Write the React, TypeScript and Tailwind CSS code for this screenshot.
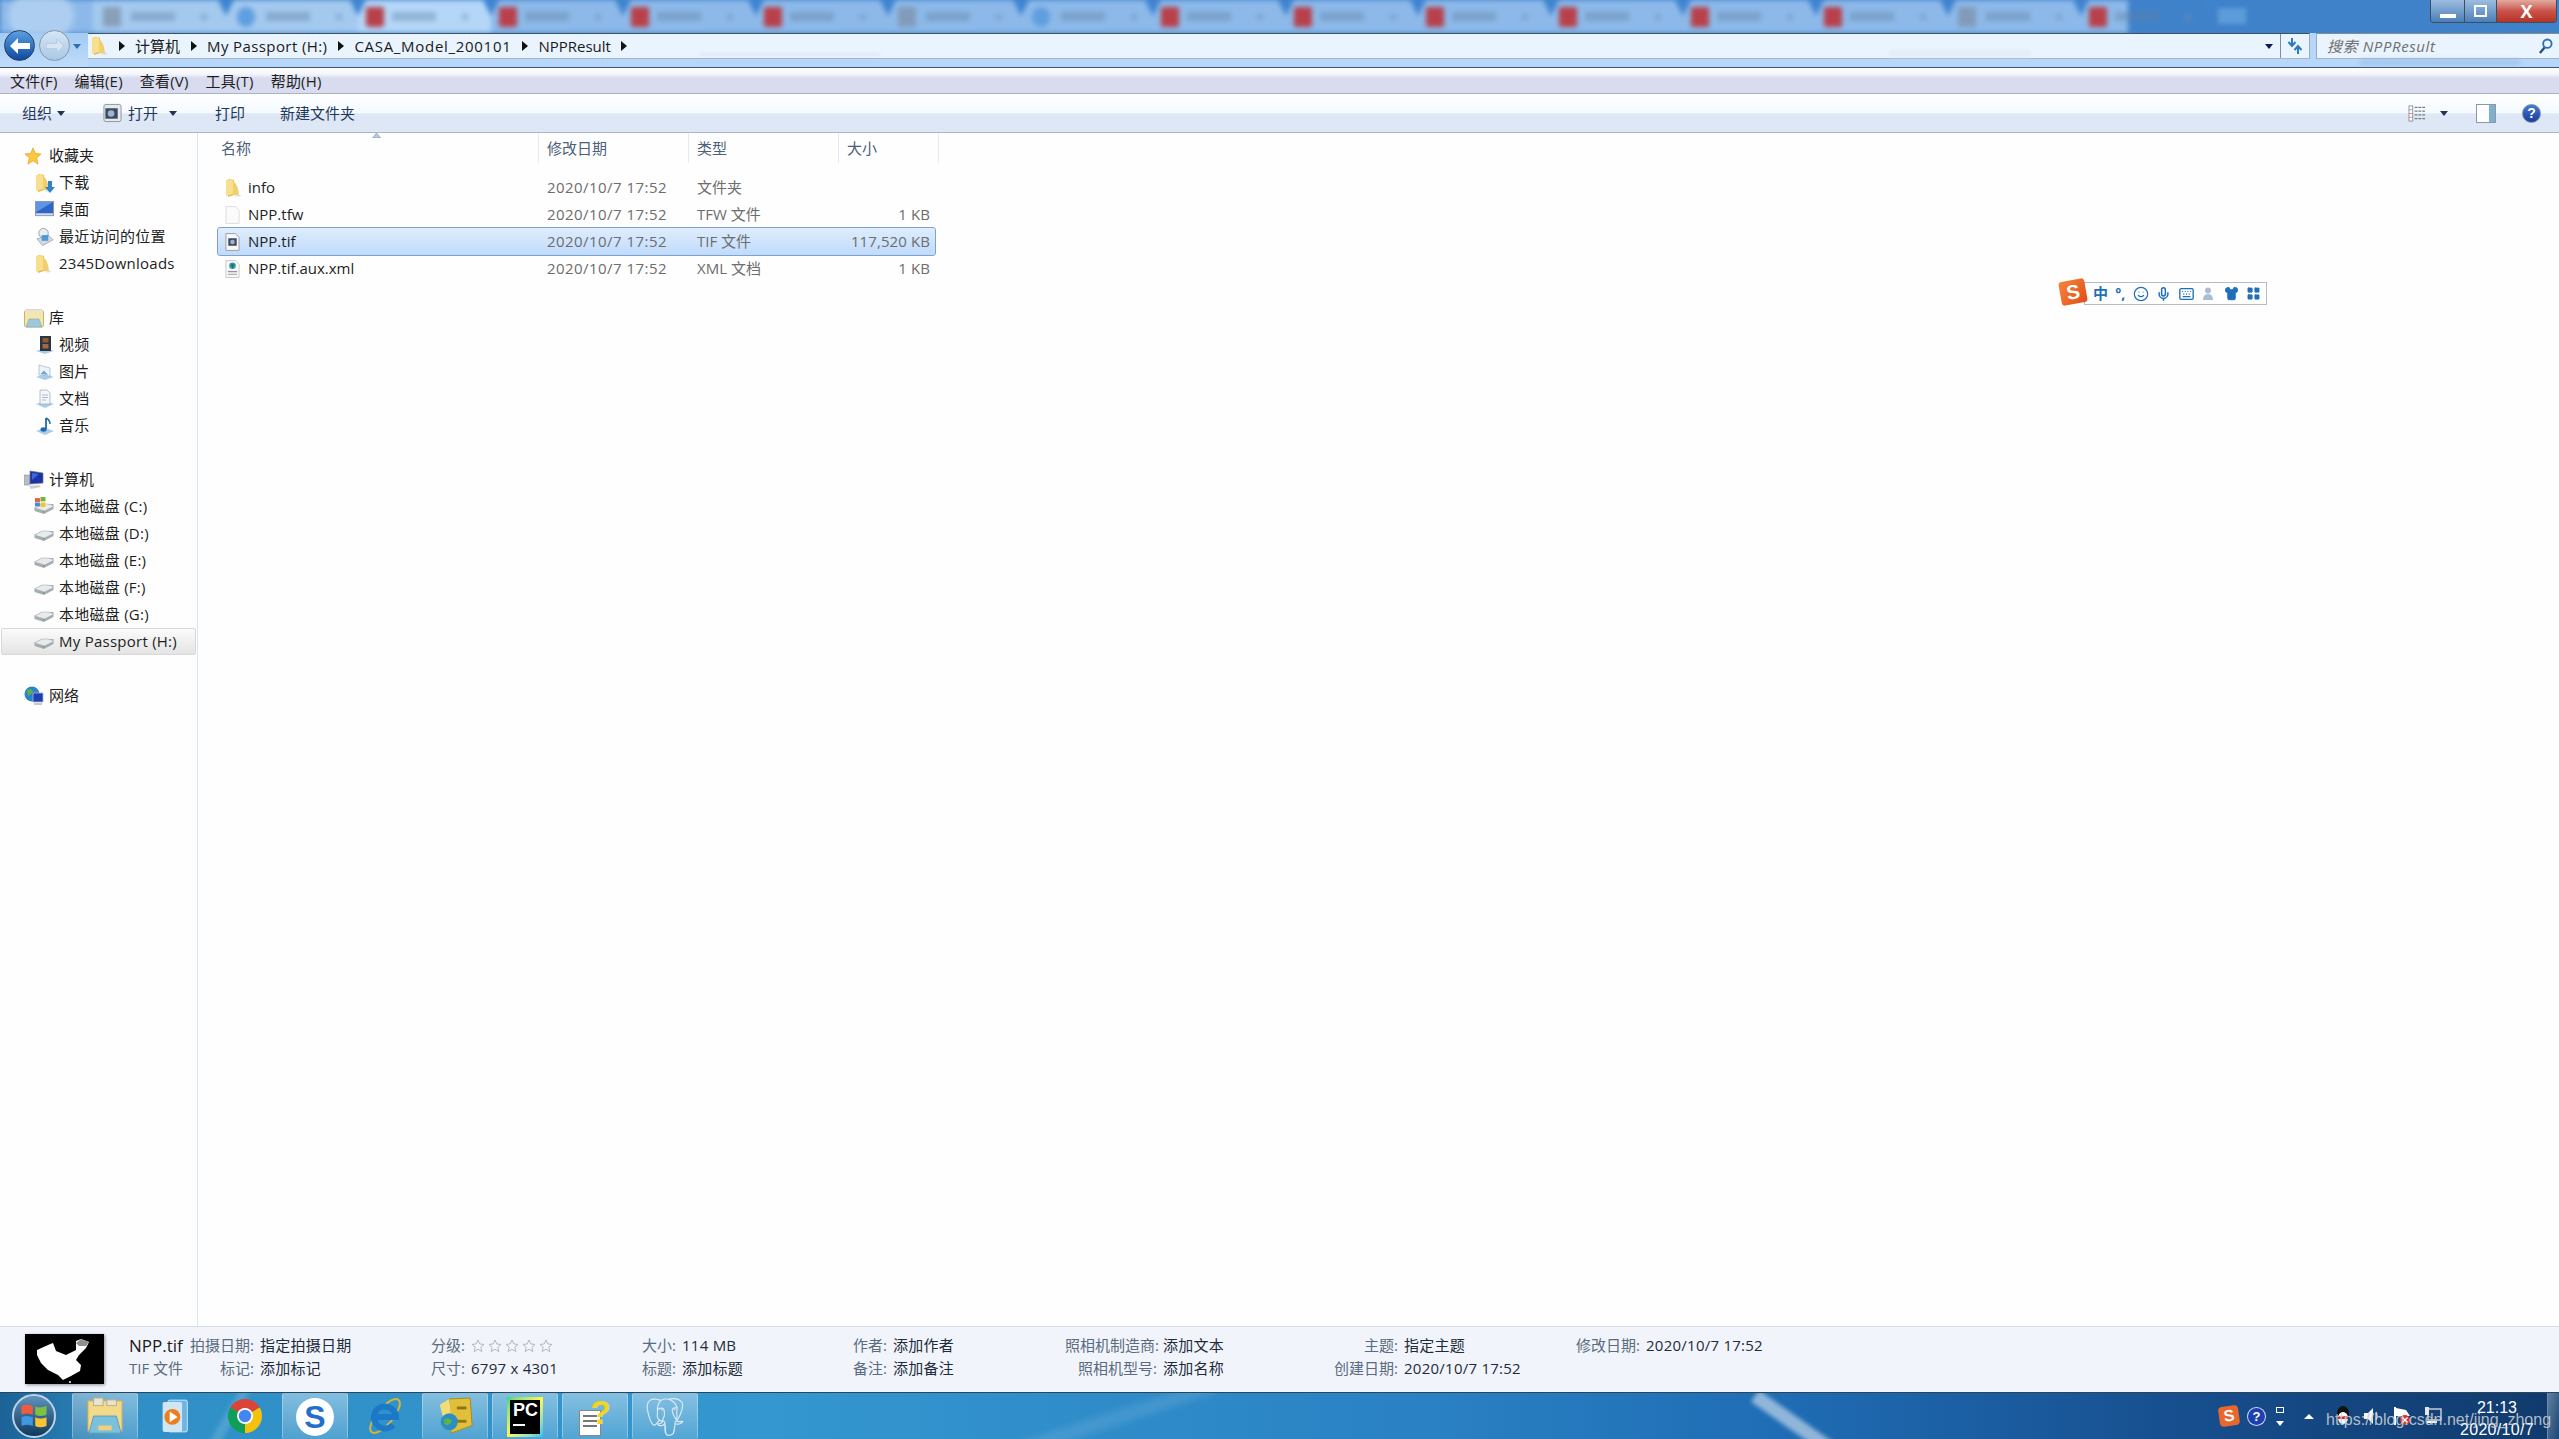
import type { ReactNode } from 'react';
import { Keyboard, LayoutGrid, Mic, Shirt, Smile } from 'lucide-react';
import { SiPostgresql } from 'react-icons/si';

const tabs = ['g', 'b', 'r', 'r', 'r', 'r', 'a', 'b', 'r', 'r', 'r', 'r', 'r', 'r', 'a', 'r'];

function Folder({ className = 'w-[18px] h-[20px]' }: { className?: string }) {
  return (
    <svg viewBox="0 0 18 20" className={className}>
      <path d="M3 1 L9 2 L9 17 L3 19 Z" fill="#e2b94f" />
      <path d="M1 2 L8 1 L8 16 L1 18 Z" fill="#f6df8e" />
      <path d="M8 3 Q13 6 14 17 L8 17 Z" fill="#f0cf6c" />
      <path d="M14 17 L17 17 L14 18.5 L8 18 Z" fill="#c9ccd0" opacity="0.7" />
    </svg>
  );
}

function Star() {
  return (
    <svg viewBox="0 0 20 20" className="w-[18px] h-[20px]">
      <path d="M10 1 L12.6 7.2 L19 7.8 L14 12 L15.6 19 L10 15.2 L4.4 19 L6 12 L1 7.8 L7.4 7.2 Z" fill="#fbc93b" stroke="#ec9a26" strokeWidth="0.8" />
    </svg>
  );
}

function DownloadFolder() {
  return (
    <div className="relative w-[18px] h-[20px]">
      <Folder />
      <svg viewBox="0 0 10 12" className="absolute right-[-2px] bottom-0 w-[10px] h-[12px]">
        <path d="M3 0 H7 V6 H10 L5 12 L0 6 H3 Z" fill="#2f86c9" />
      </svg>
    </div>
  );
}

function DesktopIcon() {
  return (
    <svg viewBox="0 0 20 18" className="w-[19px] h-[17px]">
      <rect x="0.5" y="0.5" width="19" height="15" fill="#2f66c6" stroke="#8a97ad" />
      <path d="M1 1 H19 L1 12 Z" fill="#5e95e6" />
      <rect x="1" y="13" width="18" height="2" fill="#d7dde8" />
    </svg>
  );
}

function RecentIcon() {
  return (
    <svg viewBox="0 0 20 20" className="w-[19px] h-[20px]">
      <circle cx="9" cy="6" r="5" fill="#e9edf1" stroke="#9aa3ac" />
      <path d="M2 12 L14 8 L19 13 L8 19 Z" fill="#d5dae0" stroke="#8d949c" strokeWidth="0.7" />
      <rect x="7" y="8" width="7" height="6" fill="#4c9ad8" />
    </svg>
  );
}

function LibraryIcon() {
  return (
    <svg viewBox="0 0 20 20" className="w-[20px] h-[20px]">
      <rect x="0.5" y="2" width="19" height="17" rx="2" fill="#f6e6a8" stroke="#cbb36b" />
      <rect x="1" y="2" width="18" height="4" fill="#ece4c6" />
      <path d="M5 11 H15 L18 19 H2 Z" fill="#9cc9dd" stroke="#7fa7bb" strokeWidth="0.6" />
    </svg>
  );
}

function VideoIcon() {
  return (
    <svg viewBox="0 0 20 20" className="w-[20px] h-[20px]">
      <path d="M1 16 L10 13 L19 16 L10 19 Z" fill="#a9cde6" />
      <rect x="5" y="1" width="11" height="15" fill="#2d3440" />
      <rect x="7.5" y="3" width="6" height="4.5" fill="#8a5a3b" />
      <rect x="7.5" y="9" width="6" height="4.5" fill="#a06a44" />
    </svg>
  );
}

function PictureIcon() {
  return (
    <svg viewBox="0 0 20 20" className="w-[20px] h-[20px]">
      <path d="M1 15 L10 12 L19 15 L10 18 Z" fill="#a9cde6" />
      <path d="M4 3 L15 6 L15 14 L4 13 Z" fill="#eef3f8" stroke="#9ab4c9" strokeWidth="0.7" />
      <path d="M5.5 12 L9 8.5 L13 13 Z" fill="#6ea6d6" />
    </svg>
  );
}

function DocIcon() {
  return (
    <svg viewBox="0 0 20 20" className="w-[20px] h-[20px]">
      <path d="M1 15 L10 12 L19 15 L10 19 Z" fill="#a9cde6" />
      <path d="M5 1 H12 L15 4 V15 H5 Z" fill="#f4f6f9" stroke="#9aa6b3" strokeWidth="0.7" />
      <path d="M7 6 H13 M7 8.5 H13 M7 11 H11" stroke="#a6b5c5" strokeWidth="0.9" />
    </svg>
  );
}

function MusicIcon() {
  return (
    <svg viewBox="0 0 20 20" className="w-[20px] h-[20px]">
      <path d="M1 15 L10 12 L19 15 L10 19 Z" fill="#a9cde6" />
      <path d="M11 2 L11 13" stroke="#2467ad" strokeWidth="1.8" />
      <path d="M11 2 Q15 4 15 8" stroke="#2467ad" strokeWidth="1.5" fill="none" />
      <ellipse cx="8.5" cy="13.5" rx="3" ry="2.2" fill="#2467ad" />
    </svg>
  );
}

function ComputerIcon() {
  return (
    <svg viewBox="0 0 20 20" className="w-[20px] h-[20px]">
      <rect x="0.5" y="5" width="5" height="10" fill="#b9bec6" stroke="#7d848d" strokeWidth="0.5" />
      <path d="M6 1 L19 3 L19 13 L6 14 Z" fill="#1d32a8" stroke="#6f7680" strokeWidth="0.7" />
      <path d="M8 3 L15 4 L8 10 Z" fill="#3c68d8" />
      <path d="M5 16 L15 15 L17 17 L7 19 Z" fill="#c9ced5" />
    </svg>
  );
}

function DriveIcon({ system = false }: { system?: boolean }) {
  return (
    <div className="relative w-[20px] h-[16px] ml-[-1px]">
      <svg viewBox="0 0 20 16" className="absolute left-0 top-0 w-[20px] h-[16px]">
        <path d="M0.5 9 L8 5 H19.5 V10 L10 15 L0.5 12 Z" fill="#a8adb2" />
        <path d="M0.5 9 L8 5 H14 Q19.5 6 19.5 7.5 L10.5 12 L0.5 9 Z" fill="#e8eaec" stroke="#9aa0a6" strokeWidth="0.5" />
        <rect x="9" y="12" width="1.5" height="1.5" fill="#56b04a" />
      </svg>
      {system && (
        <svg viewBox="0 0 10 10" className="absolute left-[1px] top-[-2px] w-[11px] h-[11px]">
          <rect x="0" y="1" width="4.5" height="3.5" fill="#ef5b3c" />
          <rect x="5" y="0" width="4.5" height="4" fill="#6fb63f" />
          <rect x="0" y="5" width="4.5" height="3.5" fill="#3d8fdc" />
          <rect x="5" y="5" width="4.5" height="4" fill="#f5c32c" />
        </svg>
      )}
    </div>
  );
}

function NetworkIcon() {
  return (
    <svg viewBox="0 0 20 20" className="w-[20px] h-[20px]">
      <circle cx="8" cy="8" r="7.5" fill="#2a84c8" />
      <path d="M3 4 Q7 2 9 5 Q7 9 4 10 Z M9 10 Q13 9 14 12 L11 15 Z" fill="#5cb347" />
      <rect x="9" y="7" width="10" height="9" fill="#1f3fb5" stroke="#aeb4bb" strokeWidth="0.8" />
      <rect x="10" y="17" width="8" height="2" fill="#c5cad0" />
    </svg>
  );
}

function BlankFile() {
  return (
    <svg viewBox="0 0 16 20" className="w-[15px] h-[20px]">
      <path d="M1 1 H11 L15 5 V19 H1 Z" fill="#fbfbfb" stroke="#dcdcdc" />
    </svg>
  );
}

function TifFile() {
  return (
    <svg viewBox="0 0 16 20" className="w-[15px] h-[20px]">
      <path d="M1 1 H11 L15 5 V19 H1 Z" fill="#f7f7f7" stroke="#9b9b9b" />
      <rect x="3.5" y="6" width="9" height="8" fill="#3d4a62" />
      <circle cx="8" cy="10" r="2.5" fill="#9fb4cf" />
    </svg>
  );
}

function XmlFile() {
  return (
    <svg viewBox="0 0 16 20" className="w-[15px] h-[20px]">
      <path d="M1 1 H11 L15 5 V19 H1 Z" fill="#fbfbfb" stroke="#c4c4c4" />
      <circle cx="8" cy="6.5" r="3.5" fill="#2a9d8f" />
      <path d="M6.5 5 L9.5 5 L8 10 Z" fill="#1f5fa8" />
      <rect x="3" y="12" width="10" height="1.5" fill="#9a8fb5" />
      <rect x="3" y="15" width="10" height="1.5" fill="#b5b5b5" />
    </svg>
  );
}

function NavItem({ icon, label, selected }: { icon: ReactNode; label: string; selected?: boolean }) {
  return (
    <div className={`h-[27px] flex items-center ml-px rounded-[2px] text-[#1e1e1e] tracking-[0.25px] ${selected ? 'bg-gradient-to-b from-[#fbfbfb] to-[#e4e4e4] border border-[#d8d8d8] pl-[33px]' : 'pl-[34px]'}`}>
      <div className="w-[24px] flex justify-start">{icon}</div>
      <span className="whitespace-nowrap">{label}</span>
    </div>
  );
}

function NavHead({ icon, label }: { icon: ReactNode; label: string }) {
  return (
    <div className="h-[27px] flex items-center pl-[24px] text-[#1e1e1e]">
      <div className="w-[25px]">{icon}</div>
      <span>{label}</span>
    </div>
  );
}

function FileRow({ icon, name, type, size, selected }: { icon: ReactNode; name: string; type: string; size: string; selected?: boolean }) {
  return (
    <div className={`h-[27px] w-[717px] grid grid-cols-[321px_150px_150px_96px] items-center rounded-[2px] ${selected ? 'bg-gradient-to-b from-[#dfedfd] to-[#c0dbfc] outline outline-1 outline-[#7da2ce]' : ''}`}>
      <div className="flex items-center pl-[7px]">
        <div className="w-[23px]">{icon}</div>
        <span className="text-[#1e1e1e]">{name}</span>
      </div>
      <div className="pl-[8px] text-[#6d6d6d] tracking-[0.45px]">2020/10/7 17:52</div>
      <div className="pl-[8px] text-[#6d6d6d]">{type}</div>
      <div className="pr-[5px] text-right text-[#6d6d6d] tracking-[0.1px]">{size}</div>
    </div>
  );
}

function ColHead({ label, className }: { label: string; className: string }) {
  return <div className={`h-[30px] flex items-center border-r border-[#e3eaf2] text-[#4c607a] ${className}`}>{label}</div>;
}

function Fields({ width, labelWidth, rows }: { width: string; labelWidth: string; rows: [string, ReactNode][] }) {
  return (
    <div className={`shrink-0 ${width}`}>
      {rows.map(([label, value]) => (
        <div key={label} className="h-[23px] flex items-center">
          <span className={`shrink-0 text-right text-[#5a6b80] whitespace-nowrap ${labelWidth}`}>{label}</span>
          <span className="ml-[6px] text-[#1e2b3c] whitespace-nowrap tracking-[0.25px]">{value}</span>
        </div>
      ))}
    </div>
  );
}

function RatingStars() {
  return (
    <span className="flex gap-[3px] items-center">
      {[0, 1, 2, 3, 4].map(i => (
        <svg key={i} viewBox="0 0 14 14" className="w-[14px] h-[14px]">
          <path d="M7 1 L8.8 5 L13 5.4 L9.8 8.2 L10.8 12.6 L7 10.2 L3.2 12.6 L4.2 8.2 L1 5.4 L5.2 5 Z" fill="#f7f7f7" stroke="#a9b1ba" strokeWidth="0.9" />
        </svg>
      ))}
    </span>
  );
}

function Crumb({ label, className = '' }: { label: string; className?: string }) {
  return (
    <>
      <span className={`text-[#1a1a1a] whitespace-nowrap ${className}`}>{label}</span>
      <Arrow />
    </>
  );
}

function Arrow() {
  return (
    <svg viewBox="0 0 6 10" className="w-[6px] h-[10px] mx-[10.5px] shrink-0">
      <path d="M0 0 L6 5 L0 10 Z" fill="#111" />
    </svg>
  );
}

function Caret({ className = 'fill-[#22344f]' }: { className?: string }) {
  return (
    <svg viewBox="0 0 8 5" className={`w-[8px] h-[5px] ${className}`}>
      <path d="M0 0 H8 L4 5 Z" />
    </svg>
  );
}

function TaskButton({ active, children }: { active?: boolean; children: ReactNode }) {
  return (
    <div className={`w-[66px] h-[46px] flex items-center justify-center rounded-[2px] ${active ? 'bg-gradient-to-b from-white/40 to-white/15 border border-white/30 border-b-0' : ''}`}>
      {children}
    </div>
  );
}

function App() {
  return (
    <div className="relative w-[2559px] h-[1439px] overflow-hidden flex flex-col bg-white text-[15px] leading-none font-['Open_Sans','Noto_Sans_CJK_SC',sans-serif]">
      {/* title bar, blurred glass behind it */}
      <div className="relative h-[33px] shrink-0 overflow-hidden bg-gradient-to-r from-[#4585cc] to-[#3f82ca]">
        <div className="absolute left-0 top-0 w-[2128px] h-[33px] flex pl-[93px] bg-[#8cb9e9] blur-[2.5px]">
          {tabs.map((t, i) => (
            <div key={i} className={`relative w-[132.5px] h-[33px] shrink-0 flex items-center pl-[8px] ${i === 2 ? 'bg-[#b4d7f8]' : i < 2 ? 'bg-[#a3c9ef]' : ''}`}>
              <div className={`w-[18px] h-[20px] rounded-[2px] ${t === 'r' ? 'bg-[#b8404a]' : t === 'b' ? 'bg-[#5f9fe0] rounded-full w-[12px] ml-[3px] mr-[3px]' : 'bg-[#7d8fa5] w-[14px] ml-[2px] mr-[2px] opacity-70'}`} />
              <div className="ml-[8px] w-[44px] h-[9px] bg-[#5f7f9f] opacity-40" />
              <div className="ml-[26px] w-[6px] h-[6px] bg-[#6f92b8] opacity-50" />
              <div className="absolute right-[-9px] top-[-2px] z-10 w-0 h-0 border-l-[9px] border-r-[9px] border-t-[18px] border-l-transparent border-r-transparent border-t-[#3f84d0]" />
            </div>
          ))}
        </div>
        <div className="absolute left-[8px] top-[-6px] w-[66px] h-[44px] rounded-full bg-[#bcd8f4] opacity-70 blur-[3px]" />
        <div className="absolute left-[2218px] top-[8px] w-[28px] h-[16px] bg-[#5d9bda] blur-[2px]" />
        <div className="absolute right-[2px] top-0 flex h-[23px] w-[127px] border border-t-0 border-[#3b4f63] rounded-b-[4px] overflow-hidden">
          <div className="w-[34px] flex items-end justify-center pb-[4px] bg-gradient-to-b from-[#9cbce0] to-[#4c7fb7] border-r border-[#3b4f63]">
            <div className="w-[16px] h-[4px] bg-white" />
          </div>
          <div className="w-[32px] flex items-center justify-center bg-gradient-to-b from-[#9cbce0] to-[#4c7fb7] border-r border-[#3b4f63]">
            <div className="w-[13px] h-[12px] border-2 border-white bg-transparent" />
          </div>
          <div className="flex-1 flex items-center justify-center bg-gradient-to-b from-[#e2a9a0] via-[#c9534a] to-[#b83224] text-white font-bold text-[18px]">X</div>
        </div>
      </div>

      {/* address row */}
      <div className="relative h-[35px] shrink-0 flex bg-[#b6d7fb] border-b border-[#3d5468]">
        <div className="w-[88px] flex items-start pl-[4px] bg-gradient-to-b from-[#a3cbf3] to-[#c0dcfb] shrink-0">
          <div className="w-[31px] h-[31px] mt-[-3px] rounded-full bg-gradient-to-b from-[#5b9fe4] to-[#0d4a9e] border border-[#24405f] flex items-center justify-center">
            <svg viewBox="0 0 20 16" className="w-[20px] h-[16px]">
              <path d="M8 0 L0 8 L8 16 V11 H20 V5 H8 Z" fill="white" />
            </svg>
          </div>
          <div className="ml-[4px] w-[31px] h-[31px] mt-[-3px] rounded-full bg-gradient-to-b from-[#d4e6f6] to-[#a9c8e6] border border-[#8a97a3] flex items-center justify-center">
            <svg viewBox="0 0 20 16" className="w-[18px] h-[14px]">
              <path d="M12 0 L20 8 L12 16 V11 H0 V5 H12 Z" fill="#d7e6f3" stroke="#b3c7da" />
            </svg>
          </div>
          <div className="ml-[3px] mt-[11px]"><Caret className="fill-[#2f70ae]" /></div>
        </div>
        <div className="w-[2222px] h-[26px] flex items-center border-t border-[#3d5468] border-b border-b-[#a7b6c5] border-r border-r-[#9aa9b8] bg-[#eaf4fe] shrink-0">
          <div className="ml-[3px] w-[17px]"><Folder className="w-[18px] h-[20px]" /></div>
          <Arrow />
          <Crumb label="计算机" />
          <Crumb label="My Passport (H:)" className="tracking-[0.4px]" />
          <Crumb label="CASA_Model_200101" className="tracking-[0.7px]" />
          <Crumb label="NPPResult" />
          <div className="ml-auto w-[29px] h-full flex items-center justify-end border-l border-[#7f8d9b] relative">
            <div className="absolute left-[-16px] top-[10px]"><Caret className="fill-[#0e1a4a]" /></div>
            <svg viewBox="0 0 16 16" className="w-[16px] h-[16px] mr-[6px]">
              <path d="M5 0 V7 M1.5 4 L5 8 L8.5 4 M11 16 V9 M7.5 12 L11 8 L14.5 12" stroke="#2d78c0" strokeWidth="2" fill="none" />
            </svg>
          </div>
        </div>
        <div className="ml-[6px] flex-1 h-[26px] flex items-center pl-[10px] border-t border-[#7f8d9b] border-b border-b-[#a7b6c5] border-l border-l-[#9aa9b8] bg-[#eaf4fe] italic text-[#6f6f6f] tracking-[0.6px]">
          搜索 NPPResult
          <svg viewBox="0 0 16 18" className="ml-auto mr-[6px] w-[15px] h-[17px]">
            <circle cx="10" cy="6" r="4.5" fill="none" stroke="#2f70ae" strokeWidth="2" />
            <path d="M7 10 L2 16" stroke="#24527f" strokeWidth="2.5" />
          </svg>
        </div>
        <div className="absolute left-[2360px] top-[26px] w-[160px] h-[7px] bg-[#8db3dd] opacity-40 blur-[2px]" />
        <div className="absolute left-[700px] top-[20px] w-[180px] h-[3px] bg-[#c4d2e0] opacity-30 blur-[1.5px]" />
        <div className="absolute left-[1890px] top-[17px] w-[140px] h-[8px] bg-[#d3dfea] opacity-30 blur-[2px]" />
      </div>

      {/* menu */}
      <div className="h-[26px] shrink-0 flex items-center gap-[17px] pl-[10px] pt-[2px] border-b border-[#a9b3c7] bg-[linear-gradient(#ffffff_0,#f4f5fa_25%,#d8dcee_40%,#d8dcee_100%)] text-[#1e1e1e] tracking-[0.2px]">
        {['文件(F)', '编辑(E)', '查看(V)', '工具(T)', '帮助(H)'].map(m => <span key={m}>{m}</span>)}
      </div>

      {/* toolbar */}
      <div className="h-[39px] shrink-0 flex items-center border-b border-[#a9b7c9] bg-[linear-gradient(#ffffff_0,#f4faff_50%,#dde7f5_52%,#dde7f5_100%)] text-[#1e395b]">
        <span className="ml-[22px]">组织</span>
        <div className="ml-[5px]"><Caret /></div>
        <svg viewBox="0 0 20 20" className="ml-[38px] w-[19px] h-[20px]">
          <rect x="1" y="1" width="18" height="18" rx="2" fill="#e5e8ec" stroke="#8c949d" />
          <rect x="2.5" y="5" width="13" height="11" fill="#3d4a62" />
          <circle cx="8.5" cy="10.5" r="3.5" fill="#9fb4cf" />
        </svg>
        <span className="ml-[6px]">打开</span>
        <div className="ml-[11px]"><Caret /></div>
        <span className="ml-[38px]">打印</span>
        <span className="ml-[35px]">新建文件夹</span>
        <div className="ml-auto flex items-center">
          <svg viewBox="0 0 20 18" className="w-[19px] h-[17px]">
            <path d="M7 2.5 H19 M7 6.5 H19 M7 10.5 H19 M7 14.5 H19" stroke="#4f5a68" strokeWidth="1" strokeDasharray="3 1" />
            <rect x="1" y="1" width="4" height="16" fill="#fff" stroke="#6f7a88" strokeWidth="0.8" />
            <path d="M1 5 H5 M1 9 H5 M1 13 H5" stroke="#c57a6b" strokeWidth="0.8" />
          </svg>
          <div className="ml-[13px]"><Caret /></div>
          <div className="ml-[28px] w-[20px] h-[19px] flex border border-[#8a98a8] bg-white">
            <div className="flex-1" />
            <div className="w-[6px] bg-[#7fb0cf]" />
          </div>
          <div className="ml-[26px] mr-[18px] w-[19px] h-[19px] rounded-full bg-gradient-to-b from-[#4678d2] to-[#1b3e9c] border border-[#7c8ba8] flex items-center justify-center text-white font-bold text-[14px] font-['Liberation_Sans']">?</div>
        </div>
      </div>

      {/* sidebar and list */}
      <div className="flex-1 flex min-h-0 bg-[#fefefe]">
        <div className="w-[198px] shrink-0 border-r border-[#d9e6f2] pt-[9px] pr-px">
          <NavHead icon={<Star />} label="收藏夹" />
          <NavItem icon={<DownloadFolder />} label="下载" />
          <NavItem icon={<DesktopIcon />} label="桌面" />
          <NavItem icon={<RecentIcon />} label="最近访问的位置" />
          <NavItem icon={<Folder />} label="2345Downloads" />
          <div className="h-[27px]" />
          <NavHead icon={<LibraryIcon />} label="库" />
          <NavItem icon={<VideoIcon />} label="视频" />
          <NavItem icon={<PictureIcon />} label="图片" />
          <NavItem icon={<DocIcon />} label="文档" />
          <NavItem icon={<MusicIcon />} label="音乐" />
          <div className="h-[27px]" />
          <NavHead icon={<ComputerIcon />} label="计算机" />
          <NavItem icon={<DriveIcon system />} label="本地磁盘 (C:)" />
          <NavItem icon={<DriveIcon />} label="本地磁盘 (D:)" />
          <NavItem icon={<DriveIcon />} label="本地磁盘 (E:)" />
          <NavItem icon={<DriveIcon />} label="本地磁盘 (F:)" />
          <NavItem icon={<DriveIcon />} label="本地磁盘 (G:)" />
          <NavItem icon={<DriveIcon />} label="My Passport (H:)" selected />
          <div className="h-[27px]" />
          <NavHead icon={<NetworkIcon />} label="网络" />
        </div>
        <div className="flex-1 pl-[20px]">
          <div className="relative flex w-[721px]">
            <ColHead label="名称" className="w-[321px] pl-[3px]" />
            <ColHead label="修改日期" className="w-[150px] pl-[8px]" />
            <ColHead label="类型" className="w-[150px] pl-[8px]" />
            <ColHead label="大小" className="w-[100px] pl-[8px]" />
            <svg viewBox="0 0 8 5" className="absolute left-[154px] top-0 w-[9px] h-[5px]">
              <path d="M0 5 L4 0 L8 5 Z" fill="#b8cde0" stroke="#6f8ba8" strokeWidth="0.6" />
            </svg>
          </div>
          <div className="pt-[11px]">
            <FileRow icon={<Folder />} name="info" type="文件夹" size="" />
            <FileRow icon={<BlankFile />} name="NPP.tfw" type="TFW 文件" size="1 KB" />
            <FileRow icon={<TifFile />} name="NPP.tif" type="TIF 文件" size="117,520 KB" selected />
            <FileRow icon={<XmlFile />} name="NPP.tif.aux.xml" type="XML 文档" size="1 KB" />
          </div>
        </div>
      </div>

      {/* details pane */}
      <div className="h-[66px] shrink-0 flex pt-[7px] border-t border-[#d5dde8] bg-[#f1f5fb]">
        <svg viewBox="0 0 79 50" className="ml-[25px] mr-[25px] w-[79px] h-[50px] shrink-0 shadow-[1px_1px_3px_rgba(0,0,0,0.4)]">
          <rect width="79" height="50" fill="#000" />
          <path d="M12 16 L23 11 L28 9 L31 17 L41 21 L51 16 L51 7 L56 5 L64 8 L61 14 L54 21 L51 26 L56 31 L55 37 L46 42 L38 46 L33 41 L23 36 L16 29 L12 21 Z" fill="#fff" />
          <path d="M51 9 L56 5 L64 8 L61 12 L54 12 Z" fill="#8f8f8f" />
          <circle cx="45" cy="48" r="1" fill="#fff" />
        </svg>
        <div className="w-[61px] shrink-0">
          <div className="h-[23px] flex items-center text-[17px] text-[#1a1a1a] whitespace-nowrap">NPP.tif</div>
          <div className="h-[23px] flex items-center text-[#5a6b80] whitespace-nowrap">TIF 文件</div>
        </div>
        <Fields width="w-[241px]" labelWidth="w-[64px]" rows={[['拍摄日期:', '指定拍摄日期'], ['标记:', '添加标记']]} />
        <Fields width="w-[211px]" labelWidth="w-[34px]" rows={[['分级:', <RatingStars />], ['尺寸:', '6797 x 4301']]} />
        <Fields width="w-[211px]" labelWidth="w-[34px]" rows={[['大小:', '114 MB'], ['标题:', '添加标题']]} />
        <Fields width="w-[212px]" labelWidth="w-[34px]" rows={[['作者:', '添加作者'], ['备注:', '添加备注']]} />
        <Fields width="w-[269px]" labelWidth="w-[92px]" rows={[['照相机制造商:', '添加文本'], ['照相机型号:', '添加名称']]} />
        <Fields width="w-[242px]" labelWidth="w-[64px]" rows={[['主题:', '指定主题'], ['创建日期:', '2020/10/7 17:52']]} />
        <Fields width="w-[200px]" labelWidth="w-[64px]" rows={[['修改日期:', '2020/10/7 17:52']]} />
      </div>

      {/* taskbar */}
      <div className="relative h-[47px] shrink-0 flex items-end border-t border-[#2b4657] overflow-hidden bg-[linear-gradient(90deg,#1c6296_0,#2f8fc6_5%,#3497cf_30%,#2a82c4_55%,#1f6cb4_70%,#174f8f_85%,#103a6c_100%)]">
        <div className="absolute left-[1755px] top-[-4px] w-[110px] h-[14px] bg-white/50 blur-[2px] rotate-[35deg] origin-left" />
        <div className="absolute left-[195px] top-[18px] w-[70px] h-[10px] bg-white/15 blur-[2px] rotate-[-60deg]" />
        <div className="absolute left-[1000px] top-[20px] w-[220px] h-[14px] bg-white/10 blur-[3px] rotate-[-18deg]" />
        <div className="relative z-10 flex items-end pl-[12px] h-[46px]">
          <div className="w-[44px] h-[44px] mb-px mr-[16px] rounded-full border-2 border-[#bcd3e6] bg-gradient-to-b from-[#5f93bd] to-[#10395f] flex items-center justify-center">
            <svg viewBox="0 0 24 24" className="w-[30px] h-[30px]">
              <path d="M2 4 Q6 2 11 4 V11 Q6 9 2 11 Z" fill="#ef5b3c" />
              <path d="M13 4.5 Q17 6 22 4 V11 Q17 13 13 11 Z" fill="#7cc142" />
              <path d="M2 13 Q6 11 11 13 V20 Q6 18 2 20 Z" fill="#3d9ae0" />
              <path d="M13 13 Q17 15 22 13 V20 Q17 22 13 20 Z" fill="#f7c531" />
            </svg>
          </div>
          <div className="flex gap-[4px]">
            <TaskButton active>
              <svg viewBox="0 0 40 42" className="w-[38px] h-[40px]">
                <path d="M2 4 H38 V36 H2 Z" fill="#f3d98a" stroke="#c9aa55" />
                <rect x="8" y="1" width="10" height="8" fill="#e9e3cf" stroke="#b9ae8a" />
                <rect x="22" y="3" width="10" height="6" fill="#e9e3cf" stroke="#b9ae8a" />
                <path d="M8 20 H32 L37 38 H3 Z" fill="#7cc0dc" stroke="#5c9cba" />
                <rect x="13" y="30" width="14" height="5" fill="#f0d07a" />
              </svg>
            </TaskButton>
            <TaskButton>
              <svg viewBox="0 0 34 40" className="w-[30px] h-[36px]">
                <rect x="9" y="2" width="22" height="36" rx="2" fill="#6db6e2" stroke="#d4ebf8" />
                <rect x="3" y="4" width="22" height="34" rx="2" fill="#cfe6f4" />
                <circle cx="14" cy="21" r="9" fill="#ef7d1a" />
                <path d="M11 15 L20 21 L11 27 Z" fill="#fff" />
              </svg>
            </TaskButton>
            <TaskButton>
              <svg viewBox="0 0 36 36" className="w-[36px] h-[36px]">
                <path d="M18 18 L3.3 9.5 A17 17 0 0 1 32.7 9.5 Z" fill="#db4437" />
                <path d="M18 18 L32.7 9.5 A17 17 0 0 1 18 35 Z" fill="#f4c20d" />
                <path d="M18 18 L18 35 A17 17 0 0 1 3.3 9.5 Z" fill="#0f9d58" />
                <circle cx="18" cy="18" r="8" fill="#fff" />
                <circle cx="18" cy="18" r="6.2" fill="#4285f4" />
              </svg>
            </TaskButton>
            <TaskButton active>
              <div className="w-[38px] h-[38px] rounded-full bg-white flex items-center justify-center text-[#2470c8] text-[32px] font-bold font-['Liberation_Sans']">S</div>
            </TaskButton>
            <TaskButton>
              <svg viewBox="0 0 40 40" className="w-[40px] h-[40px]">
                <ellipse cx="20" cy="20" rx="21" ry="8" transform="rotate(-50 20 20)" fill="none" stroke="#d8b23c" strokeWidth="2" />
                <path d="M10 21 H31 A11 11 0 1 0 28 29" fill="none" stroke="#1c79c9" strokeWidth="6" />
              </svg>
            </TaskButton>
            <TaskButton active>
              <svg viewBox="0 0 40 42" className="w-[38px] h-[40px]">
                <path d="M14 2 L36 1 L38 30 L16 38 Z" fill="#e2bf3a" stroke="#a58a1e" />
                <path d="M14 2 L4 8 L8 24 L16 20 Z" fill="#f2dc78" />
                <rect x="22" y="10" width="10" height="3" fill="#8d7416" />
                <rect x="22" y="24" width="10" height="3" fill="#8d7416" />
                <circle cx="14" cy="26" r="9" fill="#2b8ec4" />
                <path d="M8 24 Q13 20 17 25 Q14 31 9 29 Z" fill="#5cb347" />
              </svg>
            </TaskButton>
            <TaskButton active>
              <div className="relative w-[36px] h-[40px] bg-gradient-to-br from-[#21d789] via-[#fcf84a] to-[#07c3f2] p-[3px]">
                <div className="w-full h-full bg-black text-white font-bold text-[18px] leading-[20px] pl-[3px] font-['Liberation_Sans']">
                  PC
                  <div className="mt-[4px] w-[12px] h-[2px] bg-white" />
                </div>
              </div>
            </TaskButton>
            <TaskButton active>
              <div className="relative w-[32px] h-[38px]">
                <div className="absolute left-0 bottom-0 w-[22px] h-[26px] bg-white border border-[#888]">
                  <div className="mt-[4px] mx-[3px] h-[2px] bg-[#777]" />
                  <div className="mt-[3px] mx-[3px] h-[2px] bg-[#777]" />
                  <div className="mt-[3px] mx-[3px] h-[2px] bg-[#777]" />
                </div>
                <span className="absolute right-0 top-[-3px] text-[34px] font-bold leading-none text-[#f4d41f] font-['Liberation_Sans']">?</span>
              </div>
            </TaskButton>
            <TaskButton active>
              <SiPostgresql className="w-[38px] h-[38px] text-[#dde9f3]" />
            </TaskButton>
          </div>
        </div>

        <div className="relative z-10 ml-auto h-[46px] flex items-center text-white">
          <div className="w-[20px] h-[20px] rounded-[4px] rotate-[-8deg] bg-[#e8672c] flex items-center justify-center font-bold text-[16px] font-['Liberation_Sans']">S</div>
          <div className="ml-[8px] w-[19px] h-[19px] rounded-full bg-[#1d3fb0] border border-white/80 flex items-center justify-center text-[13px] font-bold font-['Liberation_Sans']">?</div>
          <div className="ml-[8px] w-[11px] flex flex-col items-center gap-[8px]">
            <div className="w-[8px] h-[6px] border border-white" />
            <Caret className="fill-white" />
          </div>
          <svg viewBox="0 0 10 5" className="ml-[19px] w-[10px] h-[5px]">
            <path d="M0 5 L5 0 L10 5 Z" fill="#fff" />
          </svg>
          <svg viewBox="0 0 16 22" className="ml-[21px] w-[16px] h-[22px]">
            <ellipse cx="8" cy="9" rx="6" ry="8" fill="#111" />
            <ellipse cx="8" cy="13" rx="5" ry="6" fill="#fff" />
            <path d="M3 11 H13 V14 H3 Z" fill="#d8252a" />
          </svg>
          <svg viewBox="0 0 18 20" className="ml-[12px] w-[18px] h-[20px]">
            <path d="M1 7 H5 L10 2 V18 L5 13 H1 Z" fill="#f3f3f3" />
            <path d="M13 6 Q15 10 13 14" stroke="#dfe8f0" fill="none" strokeWidth="1.2" />
          </svg>
          <div className="relative ml-[13px] w-[17px] h-[20px]">
            <svg viewBox="0 0 17 20" className="w-[17px] h-[20px]">
              <path d="M1 1 V19" stroke="#fff" strokeWidth="2" />
              <path d="M2 2 L12 4 L16 10 L2 10 Z" fill="#fff" />
              <circle cx="11" cy="14" r="5" fill="#d8352a" />
              <path d="M8.5 11.5 L13.5 16.5 M13.5 11.5 L8.5 16.5" stroke="#fff" strokeWidth="1.5" />
            </svg>
          </div>
          <svg viewBox="0 0 18 20" className="ml-[13px] w-[18px] h-[20px]">
            <rect x="4" y="3" width="13" height="11" fill="none" stroke="#f0f0f0" strokeWidth="1.2" />
            <rect x="1" y="1" width="4" height="8" fill="#e6e6e6" />
            <rect x="3" y="15" width="10" height="2" fill="#fff" />
          </svg>
          <div className="relative w-[92px] h-[46px] ml-[13px] font-['Liberation_Sans'] text-[16px]">
            <div className="absolute right-[30px] top-[7px]">21:13</div>
            <div className="absolute left-[5px] top-[29px] whitespace-nowrap tracking-[0.3px]">2020/10/7</div>
          </div>
          <div className="w-[12px] h-[46px] border-l border-[#6f8aa8] bg-gradient-to-br from-[#5f7f9e] to-[#1a4676]" />
        </div>
        <div className="absolute z-20 left-[2326px] top-[19px] whitespace-nowrap text-[16px] text-[#c6ccd3]/90 font-['Liberation_Sans']">https://blog.csdn.net/jing_zhong</div>
      </div>

      {/* sogou input bar, floating over the list */}
      <div className="absolute left-[2060px] top-[279px] flex items-center">
        <div className="relative z-10 w-[26px] h-[24px] rotate-[-10deg] rounded-[3px] bg-gradient-to-br from-[#f4853a] to-[#e24a17] flex items-center justify-center text-white font-bold text-[20px] font-['Liberation_Sans']">S</div>
        <div className="ml-[-2px] mt-[3px] w-[183px] h-[23px] flex items-center justify-between pl-[8px] pr-[5px] bg-white border border-[#b7bcc4] text-[#1f6fb8]">
          <span className="font-bold text-[15px]">中</span>
          <span className="font-bold text-[14px] leading-none">°,</span>
          <Smile className="w-[16px] h-[16px]" strokeWidth={1.8} />
          <Mic className="w-[15px] h-[16px]" strokeWidth={2.4} />
          <Keyboard className="w-[17px] h-[16px]" strokeWidth={2} />
          <svg viewBox="0 0 14 14" className="w-[14px] h-[14px]">
            <circle cx="6" cy="3.5" r="3" fill="#a9bdd4" />
            <path d="M1 13 Q1 7 6 7 Q11 7 11 13 Z" fill="#a9bdd4" />
          </svg>
          <Shirt className="w-[15px] h-[15px] fill-[#1f6fb8]" strokeWidth={1.5} />
          <LayoutGrid className="w-[15px] h-[15px] fill-[#1f6fb8]" strokeWidth={1} />
        </div>
      </div>
    </div>
  );
}

export default App;
